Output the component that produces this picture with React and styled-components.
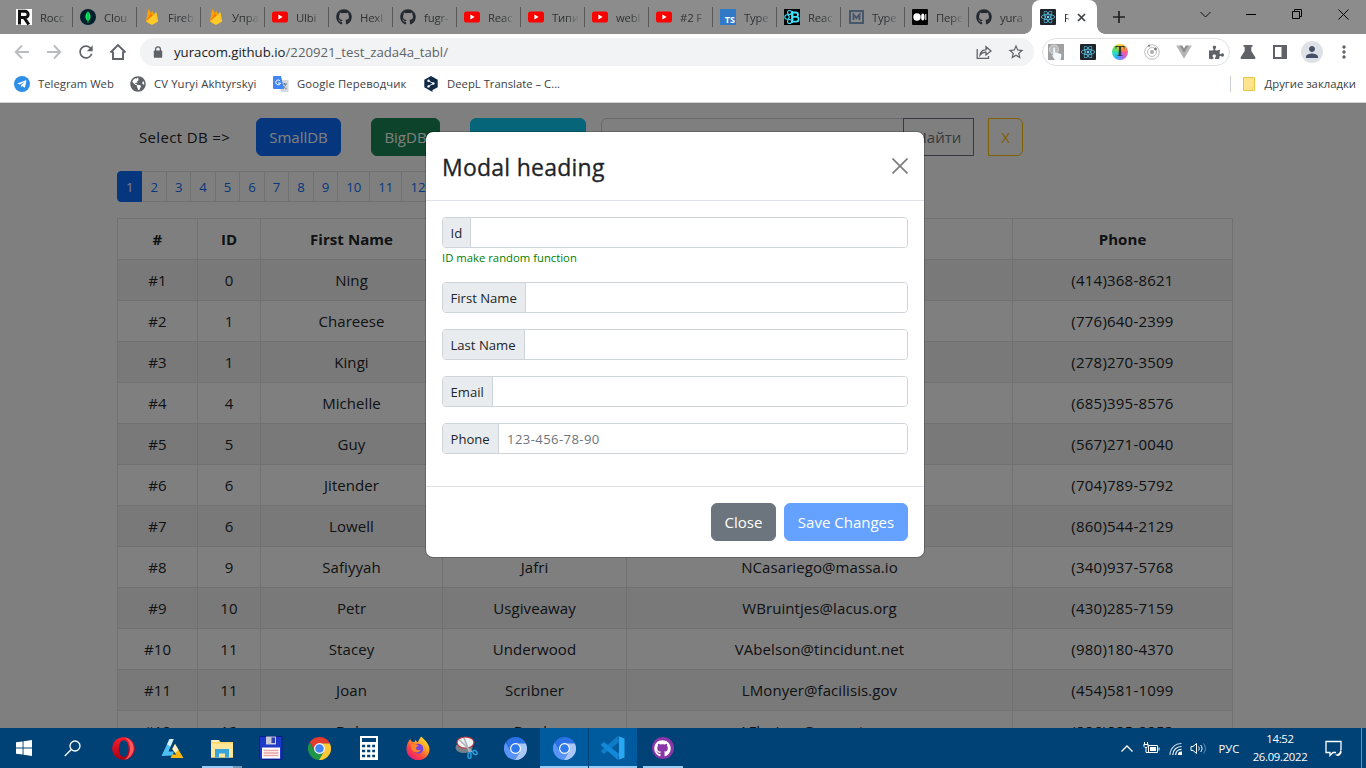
import React from "react";
import styled, { createGlobalStyle, css } from "styled-components";
import { FaGithub, FaReact, FaTelegramPlane, FaGlobeAmericas, FaPuzzlePiece } from "react-icons/fa";
import { MdStarBorder, MdRefresh, MdPerson, MdMoreVert } from "react-icons/md";

const Global = createGlobalStyle`
  *, *::before, *::after { box-sizing: border-box; }
  body { margin: 0; overflow: hidden; font-family: "Open Sans", "Noto Sans", sans-serif; color: #212529; }
  svg { display: block; flex: none; }
`;

const Screen = styled.div`
  width: 1366px;
  height: 768px;
  display: flex;
  flex-direction: column;
  overflow: hidden;
`;

/* ---------- browser chrome ---------- */
const TabStrip = styled.div`
  height: 34px;
  flex: none;
  display: flex;
  background: #8c8c8c;
  padding-left: 8px;
`;
const Tab = styled.div`
  width: 64px;
  height: 34px;
  flex: none;
  display: flex;
  align-items: center;
  padding-left: 8px;
  gap: 8px;
  font-size: 11.3px;
  color: #2f3133;
  position: relative;
  &::after {
    content: "";
    position: absolute;
    right: -1px;
    top: 7px;
    width: 1px;
    height: 20px;
    background: ${(p) => (p.$last ? "transparent" : "#56585b")};
  }
`;
const TabTitle = styled.span`
  width: ${(p) => p.$w || 26}px;
  overflow: hidden;
  white-space: nowrap;
  letter-spacing: -0.15px;
  -webkit-mask-image: linear-gradient(90deg, #000 55%, transparent 105%);
  mask-image: linear-gradient(90deg, #000 55%, transparent 105%);
`;
const ActiveTab = styled.div`
  width: 65px;
  height: 34px;
  flex: none;
  display: flex;
  align-items: center;
  padding-left: 8px;
  gap: 8px;
  background: #fff;
  border-radius: 8px 8px 0 0;
  font-size: 11.3px;
  position: relative;
  &::before, &::after {
    content: "";
    position: absolute;
    bottom: 0;
    width: 8px;
    height: 8px;
  }
  &::before { left: -8px; background: radial-gradient(circle at 0 0, transparent 7.5px, #fff 8px); }
  &::after { right: -8px; background: radial-gradient(circle at 100% 0, transparent 7.5px, #fff 8px); }
`;
const NewTab = styled.div`
  width: 44px;
  display: flex;
  align-items: center;
  justify-content: center;
`;
const WindowControls = styled.div`
  margin-left: auto;
  display: flex;
  align-items: center;
  height: 28px;
`;
const WindowButton = styled.div`
  width: 46px;
  display: flex;
  justify-content: center;
`;
const Toolbar = styled.div`
  height: 36px;
  flex: none;
  display: flex;
  align-items: center;
  background: #fff;
  padding-left: 6px;
  color: #5f6368;
`;
const ToolSlot = styled.div`
  width: 32px;
  flex: none;
  display: flex;
  justify-content: center;
`;
const Omnibox = styled.div`
  width: 894px;
  height: 28px;
  flex: none;
  margin: 0 8px 0 6px;
  border-radius: 14px;
  background: #f1f3f4;
  display: flex;
  align-items: center;
  padding: 0 2px 0 13px;
`;
const Url = styled.span`
  margin-left: 11px;
  flex: 1;
  font-size: 13.2px;
  color: #5f6368;
  b { font-weight: 400; color: #202124; }
`;
const Extensions = styled.div`
  height: 28px;
  width: 188px;
  flex: none;
  display: flex;
  align-items: center;
  justify-content: flex-start;
  border: 1px solid #dfe1e5;
  border-radius: 14px;
  margin-right: 2px;
  padding-left: 0;
  & > div:first-child { width: 26px; margin-right: 3px; }
`;
const Avatar = styled.div`
  width: 22px;
  height: 22px;
  border-radius: 50%;
  background: #dee1e6;
  color: #475069;
  display: flex;
  align-items: center;
  justify-content: center;
`;
const Bookmarks = styled.div`
  height: 33px;
  flex: none;
  background: #fff;
  border-bottom: 1px solid #d3d4d6;
  display: flex;
  align-items: center;
  padding: 0 10px 5px 14px;
  font-size: 11.3px;
  color: #3c4043;
`;
const Bookmark = styled.div`
  width: ${(p) => p.$w}px;
  display: flex;
  align-items: center;
  gap: 8px;
  white-space: nowrap;
  letter-spacing: ${(p) => p.$ls || 0}px;
`;
const OtherBookmarks = styled.div`
  margin-left: auto;
  height: 16px;
  border-left: 1px solid #c9ccd0;
  padding-left: 12px;
  display: flex;
  align-items: center;
  gap: 10px;
  white-space: nowrap;
`;

/* ---------- page ---------- */
const Viewport = styled.main`
  height: 625px;
  flex: none;
  position: relative;
  overflow: hidden;
  background: #fff;
  font-size: 15px;
  line-height: 24px;
`;
const Page = styled.div`
  padding: 15px 0 0 117px;
`;
const Controls = styled.div`
  display: flex;
  align-items: center;
  height: 38px;
`;
const SelectLabel = styled.span`
  width: 139px;
  padding-left: 22px;
  white-space: nowrap;
  letter-spacing: 0.35px;
`;
const Button = styled.button`
  font: inherit;
  font-size: 15px;
  height: 38px;
  padding: 0;
  width: ${(p) => p.$w}px;
  margin-right: ${(p) => p.$mr || 0}px;
  border: 1px solid ${(p) => p.$bg || p.$outline};
  background: ${(p) => p.$bg || "transparent"};
  color: ${(p) => p.$color || p.$outline || "#fff"};
  border-radius: ${(p) => p.$radius || "6px"};
  white-space: nowrap;
`;
const Search = styled.input`
  width: 303px;
  height: 38px;
  border: 1px solid #ced4da;
  border-radius: 6px 0 0 6px;
  margin-right: -1px;
`;
const Pages = styled.div`
  display: flex;
  margin-top: 15px;
  font-size: 13.2px;
  line-height: 21px;
`;
const PageItem = styled.span`
  width: ${(p) => (p.$wide ? 33.1 : 25.48)}px;
  height: 31px;
  margin-right: -1px;
  border: 1px solid #dee2e6;
  padding: 5px 0 3px;
  text-align: center;
  color: #0d6efd;
  ${(p) => p.$active && css`
    background: #0d6efd;
    border-color: #0d6efd;
    color: #fff;
    border-radius: 4px 0 0 4px;
    position: relative;
  `}
`;
const Table = styled.table`
  width: 1116px;
  margin-top: 16px;
  table-layout: fixed;
  border-collapse: collapse;
  text-align: center;
  letter-spacing: 0.08px;
  td, th { border: 1px solid #dee2e6; padding: 8px; height: 41px; white-space: nowrap; }
  td:last-child { letter-spacing: 0.22px; }
  th { font-weight: 700; }
  tbody tr:nth-child(odd) td { background: rgba(0, 0, 0, 0.05); }
`;
const Backdrop = styled.div`
  position: absolute;
  inset: 0;
  background: rgba(0, 0, 0, 0.5);
  padding: 28px 16px 0 0;
  display: flex;
  justify-content: center;
  align-items: flex-start;
`;
const Modal = styled.div`
  width: 500px;
  border: 1px solid rgba(0, 0, 0, 0.2);
  border-radius: 8px;
  background: #fff;
  background-clip: padding-box;
`;
const ModalHeader = styled.div`
  display: flex;
  justify-content: space-between;
  align-items: center;
  padding: 16px;
  border-bottom: 1px solid #dee2e6;
  height: 69px;
`;
const ModalTitle = styled.h4`
  margin: 0;
  padding-top: 2px;
  font-size: 23px;
  line-height: 36px;
  font-weight: 500;
  letter-spacing: 0.25px;
  -webkit-text-stroke: 0.3px #212529;
`;
const ModalBody = styled.div`
  padding: 16px;
  height: 285px;
`;
const Field = styled.div`
  margin-bottom: 16px;
`;
const InputGroup = styled.label`
  display: flex;
  height: 31px;
  border: 1px solid #ced4da;
  border-radius: 4px;
  overflow: hidden;
  font-size: 13.1px;
  line-height: 21px;
`;
const Addon = styled.span`
  width: ${(p) => p.$w}px;
  flex: none;
  padding: 5px 0 3px 7.5px;
  background: #e9ecef;
  border-right: 1px solid #ced4da;
  white-space: nowrap;
`;
const Input = styled.input`
  flex: 1;
  min-width: 0;
  border: 0;
  padding: 5px 8px 3px;
  font: inherit;
  letter-spacing: 0.4px;
  &::placeholder { color: #6c757d; opacity: 1; }
`;
const Hint = styled.div`
  color: #008000;
  font-size: 11.3px;
  line-height: 18px;
  padding-top: 1px;
  height: 18px;
`;
const ModalFooter = styled.div`
  border-top: 1px solid #dee2e6;
  padding: 16px;
  display: flex;
  justify-content: flex-end;
`;

/* ---------- taskbar ---------- */
const Taskbar = styled.footer`
  height: 40px;
  flex: none;
  display: flex;
  background: #004275;
  color: #fff;
`;
const TaskItem = styled.div`
  width: ${(p) => p.$w || 49}px;
  height: 40px;
  flex: none;
  display: flex;
  align-items: center;
  justify-content: center;
  margin-right: ${(p) => p.$mr || 0}px;
  border-right: ${(p) => (p.$active ? "1px solid #004275" : "0")};
  background: ${(p) => (p.$active ? "#005a9e" : "transparent")};
  position: relative;
  &::after {
    content: "";
    display: ${(p) => (p.$line ? "block" : "none")};
    position: absolute;
    bottom: 0;
    left: ${(p) => (p.$active ? 0 : 5)}px;
    right: ${(p) => (p.$active ? 0 : 4)}px;
    height: 2px;
    background: ${(p) => (p.$stack ? "linear-gradient(90deg, #99cbf5 77%, #7096b8 77%)" : "#99cbf5")};
  }
`;
const Tray = styled.div`
  margin-left: auto;
  display: flex;
  align-items: center;
  font-size: 11.3px;
`;
const TraySlot = styled.div`
  width: ${(p) => p.$w}px;
  margin-left: ${(p) => p.$ml || 0}px;
  display: flex;
  justify-content: center;
`;
const Clock = styled.div`
  width: 78px;
  text-align: center;
  line-height: 18px;
  letter-spacing: -0.3px;
`;
const ShowDesktop = styled.div`
  width: 5px;
  height: 40px;
  border-left: 1px solid #6890b0;
`;

/* ---------- icons ---------- */
const Svg = ({ s = 16, w, h, vb = "0 0 16 16", children, ...rest }) => (
  <svg width={w || s} height={h || s} viewBox={vb} fill="none" {...rest}>{children}</svg>
);
const YouTube = () => (
  <Svg><rect y="2.5" width="16" height="11" rx="2.6" fill="#f00" /><path d="M6.4 5.6v4.8L10.6 8z" fill="#fff" /></Svg>
);
const Firebase = () => (
  <Svg>
    <path d="M2 12.6 4.1.5c.1-.4.5-.4.7-.1L7 4.3l1-1.7c.2-.3.5-.3.7 0l5.1 10z" fill="#ffa000" />
    <path d="M2 12.6 9 6.5 7 4.2z" fill="#f57c00" />
    <path d="m2 12.6 10-9c.2-.2.5-.1.6.2l1.5 8.8-5.6 3.1a1.3 1.3 0 0 1-1.2 0z" fill="#ffca28" />
  </Svg>
);
const Mongo = () => (
  <Svg><circle cx="8" cy="8" r="8" fill="#001e2b" /><path d="M8 2.2c3.4 3.6 3.4 7 .3 10V14h-.6v-1.800c-3.100-3-3.100-6.400.3-10z" fill="#00ed64" /><path d="M8 3v10" stroke="#00883e" strokeWidth=".7" /></Svg>
);
const LetterR = () => (
  <Svg><path fill="#fff" d="M0 0h16v16H0z" /><path d="M3.500 15.500V2.300H9a3 3 0 0 1 0 6.300H4M8.300 8.800l4.500 6.700" stroke="#111" strokeWidth="3" /></Svg>
);
const TSLabel = styled.span`
  width: 16px;
  height: 16px;
  flex: none;
  background: #3178c6;
  color: #fff;
  font-size: 9px;
  font-weight: 700;
  line-height: 22px;
  text-align: right;
  padding-right: 1px;
  border-radius: 1px;
`;
const ReactBoot = () => (
  <Svg><path fill="#000" d="M0 0h16v16H0z" /><g stroke="#41e0fd" strokeWidth="1.100"><circle cx="5.500" cy="3.500" r="2" /><circle cx="3" cy="8" r="2.200" /><circle cx="5.500" cy="12.500" r="2" /></g><path d="M8.500 3.500h3.300a2.200 2.200 0 0 1 0 4.400H8.500h3.800a2.300 2.300 0 0 1 0 4.700H8.500zM8 2v12" stroke="#41e0fd" strokeWidth="1.800" /></Svg>
);
const Metanit = () => (
  <Svg><rect x="2" y="2" width="13" height="12" stroke="#44546a" strokeWidth="1.900" /><path d="M5.500 11V5.500l3 3.500 3-3.500V11" stroke="#44546a" strokeWidth="1.800" /></Svg>
);
const MediumLogo = () => (
  <Svg><rect width="16" height="16" rx="1" fill="#000" /><circle cx="5" cy="8" r="3.700" fill="#fff" /><ellipse cx="10.800" cy="8" rx="1.700" ry="3.500" fill="#fff" /><path d="M13.800 5v6" stroke="#fff" strokeWidth="1" /></Svg>
);
const ReactBadge = styled.span`
  width: 16px;
  height: 16px;
  flex: none;
  border-radius: 1px;
  background: #20232a;
  color: #61dafb;
  display: flex;
  align-items: center;
  justify-content: center;
`;
const ChromeLogo = ({ s = 23, red = "#e33b2e", yellow = "#fcc934", green = "#1e9547", mid = "#4285f4" }) => (
  <Svg s={s} vb="0 0 24 24">
    <path fill={green} d="M7.240 14.750 1.900 5.510A12 12 0 0 0 11.430 23.990L16.760 14.750z" />
    <path fill={yellow} d="M16.760 14.750 11.430 23.990A12 12 0 0 0 22.670 6.500H12z" />
    <path fill={red} d="M12 6.500h10.670A12 12 0 0 0 1.900 5.510l5.340 9.240z" />
    <circle cx="12" cy="12" r="5.700" fill="#fff" /><circle cx="12" cy="12" r="4.500" fill={mid} />
  </Svg>
);
const Chromium = () => <ChromeLogo red="#2a72e5" yellow="#a9c7fb" green="#5b94f7" mid="#2f79ee" />;
const Arrow = ({ right }) => (
  <Svg stroke="#babcbe" strokeWidth="1.900"><path d={right ? "M1 8h13M8 1.500 14.300 8 8 14.500" : "M15 8H2M8 1.500 1.700 8 8 14.500"} /></Svg>
);
const Home = () => <Svg s={18} vb="0 0 18 18" stroke="#5f6368" strokeWidth="1.900"><path d="M1.500 9.500 9 2l7.500 7.500M4 8.500V16h10V8.500" /></Svg>;
const Lock = () => <Svg w={10} h={12} vb="0 0 10 12"><rect x=".8" y="4.500" width="8.400" height="7.200" rx=".8" fill="#5f6368" /><path d="M2.600 5V3.200a2.400 2.400 0 0 1 4.800 0V5" stroke="#5f6368" strokeWidth="1.300" /></Svg>;
const Share = () => <Svg stroke="#5f6368" strokeWidth="1.300"><path d="M1.200 5v9.300h11.300V12M4 11c.5-3.700 2.500-5.200 6-5.200V2.700L15 7l-5 4V8.200C7.500 8.200 5.500 9 4 11z" /></Svg>;
const Touch = () => (
  <Svg><path fill="#a0a0a0" d="M0 0h16v16H0z" /><circle cx="6" cy="5.500" r="4.500" fill="#bbb" stroke="#d8d8d8" /><path d="M5.300 4.500c0-1.200 1.700-1.200 1.700 0v4l5.500 1.200c1 .3 1 1.400.8 2.300l-.8 4H7l-3.300-5 1.600.600z" fill="#f4f8ff" /></Svg>
);
const RainbowBall = styled.span`
  width: 16px;
  height: 16px;
  border-radius: 50%;
  background: conic-gradient(#ffd32c, #ff8a3a, #f45ca5, #a06cf5, #35a8ff, #23dcc5, #75dd4f, #ffd32c);
  font: 700 14px/16px "Liberation Serif", serif;
  color: #333;
  text-align: center;
`;
const Orbit = () => (
  <Svg stroke="#bdbdbd"><circle cx="8" cy="8" r="7.300" /><circle cx="8" cy="8" r="4.500" /><circle cx="8" cy="8" r="1.800" fill="#aaa" /><circle cx="5" cy="1.800" r="1" fill="#777" stroke="none" /><circle cx="11.500" cy="5" r="1.400" fill="#777" stroke="none" /></Svg>
);
const Vue = () => <Svg><path d="M.3 1.500h3.400L8 9l4.300-7.500h3.400L8 14.800z" fill="#b4b4b4" /><path d="M3.500 1.500h2.700L8 4.600l1.800-3.100h2.700L8 9.300z" fill="#8c8c8c" /></Svg>;
const Flask = () => <Svg><path d="M3.500 1h9v1.700h-1.200V7l4 6.300V15H.7v-1.700l4-6.300V2.700H3.500z" fill="#5f6368" /></Svg>;
const SidePanel = () => <Svg><path d="M1 1h14v14H1zM3 3v10h6.500V3z" fill="#5f6368" fillRule="evenodd" /></Svg>;
const Translate = () => (
  <Svg><path d="M5 4h10.500v12H8z" fill="#d5d8dc" /><path d="M9 8h5M11.500 7v1.500M13 8c-.5 2-2 3.500-3.500 4.500M10 10c1 1.500 2 2.200 3.500 2.700" stroke="#607d8b" strokeWidth=".9" /><path d="M0 1a1 1 0 0 1 1-1h7l3 13H1a1 1 0 0 1-1-1z" fill="#4285f4" /><path d="M7 4.800A2.400 2.400 0 1 0 7.500 7H5.200" stroke="#fff" /></Svg>
);
const DeepL = () => (
  <Svg><path d="M8 0l6.700 3.700v7.500L9.500 14v2l-3-1.700L1.300 11.200V3.700z" fill="#0f2b46" /><path d="m5.500 4.800 4.800 2.700-4.800 2.800" stroke="#fff" strokeWidth=".9" /><circle cx="5.500" cy="4.800" r="1.200" fill="#fff" /><circle cx="10.300" cy="7.500" r="1.300" fill="#fff" /><circle cx="5.500" cy="10.400" r="1.200" fill="#fff" /></Svg>
);
const Telegram = styled.span`
  width: 16px;
  height: 16px;
  border-radius: 50%;
  background: #2f8fe8;
  color: #fff;
  display: flex;
  align-items: center;
  justify-content: center;
`;
const Folder = () => <Svg w={12} h={14} vb="0 0 12 14"><path d="M.5.500h11v13H.5z" fill="#ffe48f" stroke="#e8c53f" /><path d="M9.500 13.500v-3l2-.8v3.800z" fill="#fff0ae" stroke="#e8c53f" strokeWidth=".7" /></Svg>;
const Windows = () => <Svg><path fill="#fff" d="M0 2.300 6.600 1.400v6.200H0zM7.500 1.200 16 0v7.600H7.500zM0 8.400h6.600v6.200L0 13.700zM7.500 8.400H16V16l-8.500-1.200z" /></Svg>;
const TaskSearch = () => <Svg s={17} vb="0 0 17 17" stroke="#fff" strokeWidth="1.300"><circle cx="11" cy="6" r="5" /><path d="M7.300 9.500.8 16" /></Svg>;
const Opera = () => (
  <Svg s={23} vb="0 0 23 23">
    <defs><linearGradient id="op" x1="0" y1="0" x2="0" y2="1"><stop stopColor="#ff1b2d" /><stop offset="1" stopColor="#a70014" /></linearGradient></defs>
    <circle cx="11.500" cy="11.500" r="11.300" fill="url(#op)" /><path d="M12 .3a11.300 11.300 0 0 1 0 22.400c8-3 8-19 0-22.400z" fill="#ff5a5f" /><ellipse cx="11.700" cy="11.500" rx="4.900" ry="8.600" fill="#004275" />
  </Svg>
);
const AimLogo = () => (
  <Svg w={23} h={21} vb="0 0 23 21">
    <path d="M8.500 1h4.200L7.500 13.500H13l-1.500 4-11 .5z" fill="#4fc0f5" /><path d="M8.500 1h4.200L9.500 8.500 6 6.500z" fill="#d8f3ff" />
    <path d="M14 6 22.500 20H9.500l1.800-3.500h4l-4-5.500z" fill="#f7b614" /><path d="M14 6l3.500 5.700-3.200 3.300-3-4z" fill="#fff1c4" />
  </Svg>
);
const Explorer = () => (
  <Svg w={22} h={19} vb="0 0 22 19"><path d="M0 1h8l1.500 2H22v15.500H0z" fill="#ffd767" /><path d="M0 4.500h22v14H0z" fill="#ffe79b" /><path d="M1.500 2h6" stroke="#fff" strokeWidth="1.500" /><path d="M4 18.500V10h14v8.500h-4v-4H8v4z" fill="#35a5dc" /></Svg>
);
const Floppy = () => (
  <Svg w={24} h={24} vb="0 0 24 24"><path d="M1 .5h22v23H2L.5 22V1z" fill="#1c39c9" stroke="#0c1e82" /><path d="M7 .5h10v8H7z" fill="#c7c9d4" /><path d="M12.500 1.500H16v5.500h-3.500z" fill="#2b3fae" /><path d="M3 11.500h18v11H3z" fill="#fff" /><path d="M4.500 14.500h15M4.500 17h15M4.500 19.500h15" stroke="#eba3a3" strokeWidth="1.300" /></Svg>
);
const Calculator = () => (
  <Svg w={18} h={24} vb="0 0 18 24"><path fill="#fff" d="M0 0h18v24H0z" /><path fill="#004275" d="M2 2h14v4H2z" /><path d="M2 10h13M2 15h13M2 20h13" stroke="#004275" strokeWidth="2.600" strokeDasharray="3.200 1.900" /></Svg>
);
const Firefox = () => (
  <Svg s={24} vb="0 0 24 24">
    <defs><linearGradient id="ff" x1="1" y1="0" x2=".2" y2="1"><stop stopColor="#fff14a" /><stop offset=".4" stopColor="#ffa422" /><stop offset=".7" stopColor="#ff453f" /><stop offset="1" stopColor="#e31580" /></linearGradient></defs>
    <path d="M2.500 5.500 4 3l2 2.800 2.500.2 1-2 2 2.500L15 .5c4 3.500 8.500 7.500 8.500 13A11.500 11 0 0 1 .5 13c0-3 .8-5.500 2-7.500z" fill="url(#ff)" />
    <circle cx="12.300" cy="12.800" r="5" fill="#7542e5" /><path d="M5 8.500c3-1 6-.5 7.500 1.500L10 11.500c0 2.500 2.500 3.500 5 2-1.500 4-8 4-9.500-.5z" fill="#ff8128" />
  </Svg>
);
const Snip = () => (
  <Svg w={24} h={24} vb="0 0 24 24"><ellipse cx="9" cy="11.500" rx="8.500" ry="5.500" fill="#777f88" /><ellipse cx="10.500" cy="6.500" rx="8.500" ry="5.500" fill="#f1f2f4" stroke="#c5333a" strokeWidth="1.200" /><path d="M4 3.500 17 16M9 2l5.500 14" stroke="#adb4bc" strokeWidth="1.700" /><g stroke="#2d9fd8" strokeWidth="1.500"><ellipse cx="20" cy="16.500" rx="2.500" ry="1.700" transform="rotate(45 20 16.500)" /><ellipse cx="14.500" cy="19.500" rx="1.500" ry="3" /></g></Svg>
);
const VSCode = () => (
  <Svg s={24} vb="0 0 24 24"><path d="m17 0 1 6L3 18l-3-2.500v-.8z" fill="#0f7cc7" /><path d="M0 8.500 3 6l15 12-1 6L0 9.300z" fill="#1289d8" /><path d="M17 0l6.500 2.500V21.500L17 24c1-.5 1-1 1-2V2c0-1 0-1.500-1-2z" fill="#29a8f2" /></Svg>
);
const GitBadge = styled.span`
  width: 22px;
  height: 22px;
  border-radius: 50%;
  background: #8a35a8;
  color: #fff;
  display: flex;
  align-items: center;
  justify-content: center;
`;
const Battery = () => <Svg w={17} h={12} vb="0 0 17 12" stroke="#fff"><path d="M5.500 3.500h9v7h-9z" /><path d="M7 5h6v4H7z" fill="#fff" stroke="none" /><path d="M16 5.500v3M1.500 0v2.500M4.500 0v2.500M.5 2.500h5M1 3v1.500l1 1h2l1-1V3M3 5.500v5h3" /></Svg>;
const Wifi = () => <Svg w={13} h={13} vb="0 0 13 13" stroke="#fff" strokeWidth="1.200"><path d="M1 13C1 6.500 6 1.500 12.500 1.500" opacity=".75" /><path d="M3.800 13c0-5 3.700-8.500 8.700-8.500M6.700 13c0-3.300 2.500-5.600 5.800-5.600" /><path d="M9.500 13c0-1.500 1.300-2.800 3-2.800V13z" fill="#fff" /></Svg>;
const Sound = () => <Svg w={17} h={13} vb="0 0 17 13" stroke="#fff"><path d="M1 4.500h2L6.500 1.500v10L3 8.500H1zM8.500 4.500c1 1.300 1 2.700 0 4M10.700 3c1.800 2.300 1.800 4.700 0 7" /><path d="M13.500 1.500c2.500 3.300 2.500 6.700 0 10" opacity=".4" /></Svg>;
const Notice = () => <Svg w={17} h={17} vb="0 0 17 17" stroke="#fff" strokeWidth="1.300"><path d="M11 12.500H8l-3 3v-3H1V1.500h15V10" /><path d="M15.500 9.500a3.300 3.300 0 1 1-5.500 5c3.500 0 5-1.500 5.500-5z" fill="#fff" stroke="none" /></Svg>;

const git = <FaGithub size={16} color="#24292f" />;
const tabs = [
  [<LetterR />, "Rocc"], [<Mongo />, "Clou"], [<Firebase />, "Fireb"], [<Firebase />, "Упра"],
  [<YouTube />, "Ulbi"], [git, "Hexl"], [git, "fugr-"], [<YouTube />, "Reac"], [<YouTube />, "Типи"],
  [<YouTube />, "webl"], [<YouTube />, "#2 F"], [<TSLabel>TS</TSLabel>, "Type"], [<ReactBoot />, "Reac"],
  [<Metanit />, "Type"], [<MediumLogo />, "Пере"], [git, "yura"],
];
const reactBadge = <ReactBadge><FaReact size={14} /></ReactBadge>;
const extensions = [<Touch />, reactBadge, <RainbowBall>T</RainbowBall>, <Orbit />, <Vue />, <FaPuzzlePiece size={15} />];

const rows = [
  ["0", "Ning", "", "", "(414)368-8621"],
  ["1", "Chareese", "", "", "(776)640-2399"],
  ["1", "Kingi", "", "", "(278)270-3509"],
  ["4", "Michelle", "", "", "(685)395-8576"],
  ["5", "Guy", "", "", "(567)271-0040"],
  ["6", "Jitender", "", "", "(704)789-5792"],
  ["6", "Lowell", "", "", "(860)544-2129"],
  ["9", "Safiyyah", "Jafri", "NCasariego@massa.io", "(340)937-5768"],
  ["10", "Petr", "Usgiveaway", "WBruintjes@lacus.org", "(430)285-7159"],
  ["11", "Stacey", "Underwood", "VAbelson@tincidunt.net", "(980)180-4370"],
  ["11", "Joan", "Scribner", "LMonyer@facilisis.gov", "(454)581-1099"],
  ["12", "Dale", "Brade", "AFlorimo@necante.org", "(886)885-2253"],
];
const fields = [["Id", 28], ["First Name", 83], ["Last Name", 82], ["Email", 50], ["Phone", 56]];

function Browser() {
  return (
    <>
      <TabStrip>
        {tabs.map(([icon, title], i) => (
          <Tab key={i} $last={i === tabs.length - 1}>{icon}<TabTitle>{title}</TabTitle></Tab>
        ))}
        <ActiveTab>
          {reactBadge}<TabTitle $w={5}>R</TabTitle>
          <Svg s={9} vb="0 0 9 9" stroke="#3c4043" strokeWidth="1.700"><path d="m1 1 7 7M8 1 1 8" /></Svg>
        </ActiveTab>
        <NewTab><Svg s={12} vb="0 0 12 12" stroke="#202124" strokeWidth="1.700"><path d="M6 0v12M0 6h12" /></Svg></NewTab>
        <WindowControls>
          <WindowButton><Svg s={11} vb="0 0 11 11" stroke="#111"><path d="M.5 3 5.500 8l5-5" /></Svg></WindowButton>
          <WindowButton><Svg s={10} vb="0 0 10 10" stroke="#000"><path d="M0 5.500h10" /></Svg></WindowButton>
          <WindowButton><Svg s={10} vb="0 0 10 10" stroke="#000"><path d="M.5 2.500h7v7h-7zM2.500 2.500v-2h7v7h-2" /></Svg></WindowButton>
          <WindowButton><Svg s={11} vb="0 0 11 11" stroke="#000"><path d="m.5.500 10 10M10.500.500l-10 10" /></Svg></WindowButton>
        </WindowControls>
      </TabStrip>
      <Toolbar>
        <ToolSlot><Arrow /></ToolSlot>
        <ToolSlot><Arrow right /></ToolSlot>
        <ToolSlot><MdRefresh size={20} /></ToolSlot>
        <ToolSlot><Home /></ToolSlot>
        <Omnibox>
          <Lock />
          <Url><b>yuracom.github.io</b>/220921_test_zada4a_tabl/</Url>
          <ToolSlot><Share /></ToolSlot>
          <ToolSlot><MdStarBorder size={18} /></ToolSlot>
        </Omnibox>
        <Extensions>{extensions.map((e, i) => <ToolSlot key={i}>{e}</ToolSlot>)}</Extensions>
        <ToolSlot><Flask /></ToolSlot>
        <ToolSlot><SidePanel /></ToolSlot>
        <ToolSlot><Avatar><MdPerson size={18} /></Avatar></ToolSlot>
        <ToolSlot><MdMoreVert size={20} /></ToolSlot>
      </Toolbar>
      <Bookmarks>
        <Bookmark $w={116}><Telegram><FaTelegramPlane size={10} /></Telegram>Telegram Web</Bookmark>
        <Bookmark $w={143} $ls={0.12}><FaGlobeAmericas size={16} color="#5f6368" />CV Yuryi Akhtyrskyi</Bookmark>
        <Bookmark $w={150} $ls={0.12}><Translate />Google Переводчик</Bookmark>
        <Bookmark $w={140}><DeepL />DeepL Translate – C...</Bookmark>
        <OtherBookmarks><Folder />Другие закладки</OtherBookmarks>
      </Bookmarks>
    </>
  );
}

function ContactsPage() {
  return (
    <Page>
      <Controls>
        <SelectLabel>Select DB =&gt;</SelectLabel>
        <Button $w={85} $mr={30} $bg="#0d6efd">SmallDB</Button>
        <Button $w={69} $mr={30} $bg="#198754">BigDB</Button>
        <Button $w={116} $mr={15} $bg="#0dcaf0" $color="#000">Add person</Button>
        <Search />
        <Button $w={71} $mr={14} $outline="#6c757d" $radius="0">Найти</Button>
        <Button $w={35} $outline="#ffc107" $radius="0 6px 6px 0">X</Button>
      </Controls>
      <Pages>
        {Array.from({ length: 12 }, (_, i) => (
          <PageItem key={i} $active={i === 0} $wide={i > 8}>{i + 1}</PageItem>
        ))}
      </Pages>
      <Table>
        <colgroup>{[80, 63, 182, 184, 386, 220].map((w, i) => <col key={i} width={w} />)}</colgroup>
        <thead><tr>{["#", "ID", "First Name", "Last Name", "Email", "Phone"].map((h) => <th key={h}>{h}</th>)}</tr></thead>
        <tbody>
          {rows.map((r, i) => <tr key={i}><td>#{i + 1}</td>{r.map((c, j) => <td key={j}>{c}</td>)}</tr>)}
        </tbody>
      </Table>
    </Page>
  );
}

function AddModal() {
  return (
    <Backdrop>
      <Modal>
        <ModalHeader>
          <ModalTitle>Modal heading</ModalTitle>
          <Svg stroke="#7c7c7c" strokeWidth="1.600"><path d="m.5.500 15 15M15.500.500l-15 15" /></Svg>
        </ModalHeader>
        <ModalBody>
          {fields.map(([name, w]) => (
            <Field key={name}>
              <InputGroup><Addon $w={w}>{name}</Addon><Input placeholder={name === "Phone" ? "123-456-78-90" : ""} /></InputGroup>
              {name === "Id" && <Hint>ID make random function</Hint>}
            </Field>
          ))}
        </ModalBody>
        <ModalFooter>
          <Button $w={65} $mr={8} $bg="#6c757d">Close</Button>
          <Button $w={124} $bg="#65a2ff">Save Changes</Button>
        </ModalFooter>
      </Modal>
    </Backdrop>
  );
}

function WindowsTaskbar() {
  return (
    <Taskbar>
      <TaskItem $w={48}><Windows /></TaskItem>
      <TaskItem $w={48} $mr={3}><TaskSearch /></TaskItem>
      <TaskItem><Opera /></TaskItem>
      <TaskItem><AimLogo /></TaskItem>
      <TaskItem $line $stack><Explorer /></TaskItem>
      <TaskItem><Floppy /></TaskItem>
      <TaskItem><ChromeLogo /></TaskItem>
      <TaskItem><Calculator /></TaskItem>
      <TaskItem><Firefox /></TaskItem>
      <TaskItem><Snip /></TaskItem>
      <TaskItem><Chromium /></TaskItem>
      <TaskItem $active $line><Chromium /></TaskItem>
      <TaskItem $active $line><VSCode /></TaskItem>
      <TaskItem $line><GitBadge><FaGithub size={17} /></GitBadge></TaskItem>
      <Tray>
        <TraySlot $w={24}><Svg w={12} h={7} vb="0 0 12 7" stroke="#fff" strokeWidth="1.300"><path d="m.5 6.500 5.500-5.500 5.500 5.500" /></Svg></TraySlot>
        <TraySlot $w={24}><Battery /></TraySlot>
        <TraySlot $w={24}><Wifi /></TraySlot>
        <TraySlot $w={22}><Sound /></TraySlot>
        <TraySlot $w={24} $ml={8}>РУС</TraySlot>
        <Clock>14:52<br />26.09.2022</Clock>
        <TraySlot $w={28}><Notice /></TraySlot>
        <TraySlot $w={14} />
        <ShowDesktop />
      </Tray>
    </Taskbar>
  );
}

export default function App() {
  return (
    <Screen>
      <Global />
      <Browser />
      <Viewport>
        <ContactsPage />
        <AddModal />
      </Viewport>
      <WindowsTaskbar />
    </Screen>
  );
}
